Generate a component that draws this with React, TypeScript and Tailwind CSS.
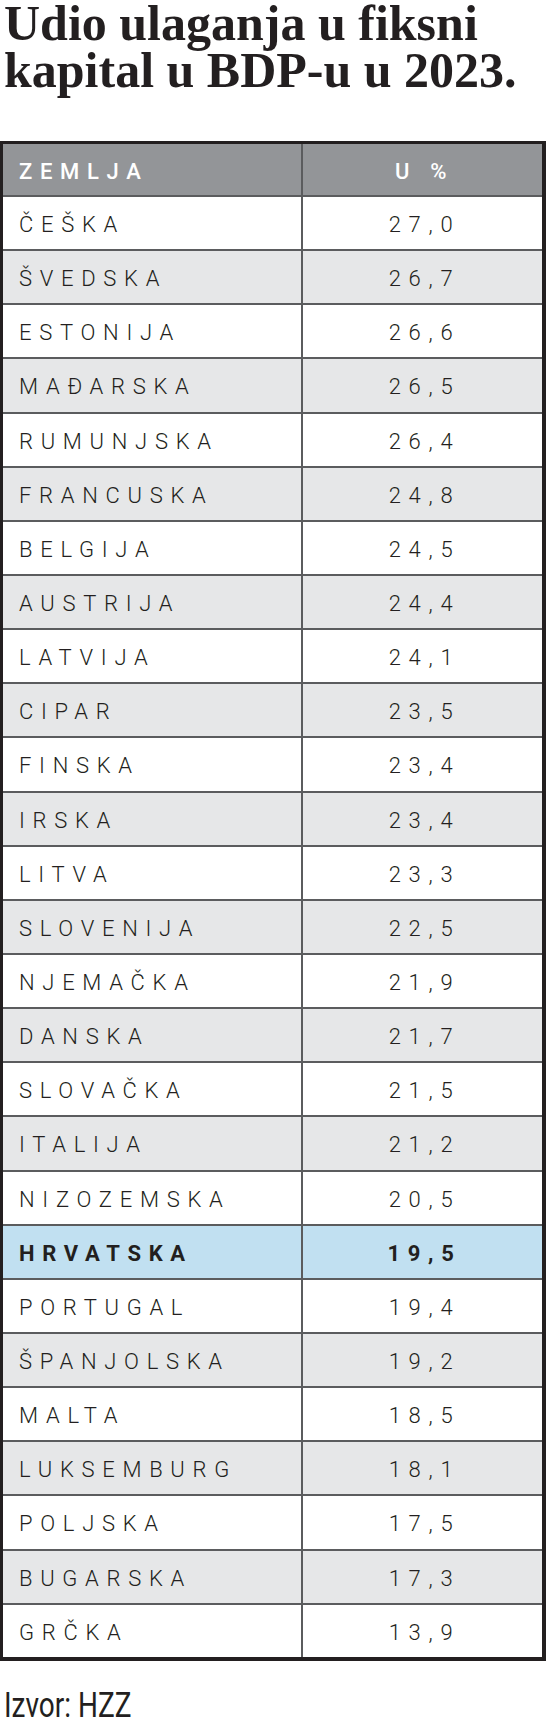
import React from "react";

type Row = { country: string; value: string; highlight?: boolean };

const rows: Row[] = [
  { country: "ČEŠKA", value: "27,0" },
  { country: "ŠVEDSKA", value: "26,7" },
  { country: "ESTONIJA", value: "26,6" },
  { country: "MAĐARSKA", value: "26,5" },
  { country: "RUMUNJSKA", value: "26,4" },
  { country: "FRANCUSKA", value: "24,8" },
  { country: "BELGIJA", value: "24,5" },
  { country: "AUSTRIJA", value: "24,4" },
  { country: "LATVIJA", value: "24,1" },
  { country: "CIPAR", value: "23,5" },
  { country: "FINSKA", value: "23,4" },
  { country: "IRSKA", value: "23,4" },
  { country: "LITVA", value: "23,3" },
  { country: "SLOVENIJA", value: "22,5" },
  { country: "NJEMAČKA", value: "21,9" },
  { country: "DANSKA", value: "21,7" },
  { country: "SLOVAČKA", value: "21,5" },
  { country: "ITALIJA", value: "21,2" },
  { country: "NIZOZEMSKA", value: "20,5" },
  { country: "HRVATSKA", value: "19,5", highlight: true },
  { country: "PORTUGAL", value: "19,4" },
  { country: "ŠPANJOLSKA", value: "19,2" },
  { country: "MALTA", value: "18,5" },
  { country: "LUKSEMBURG", value: "18,1" },
  { country: "POLJSKA", value: "17,5" },
  { country: "BUGARSKA", value: "17,3" },
  { country: "GRČKA", value: "13,9" },
];

const sans = "font-['Roboto','Liberation_Sans',sans-serif]";

export default function App() {
  return (
    <div className="w-[546px] bg-white text-[#231f20]">
      <h1 className="pl-1 font-['Liberation_Serif',serif] text-[50px] font-bold leading-[47px]">
        Udio ulaganja u fiksni
        <br />
        kapital u BDP-u u 2023.
      </h1>

      {/* tablica */}
      <div className={`mt-[47px] border-t-[3px] border-r-4 border-b-4 border-l-[3px] border-[#231f20] ${sans}`}>
        <div className="flex h-[51px] bg-[#939598] text-[22px] font-medium leading-none tracking-[0.35em] text-white">
          <div className="flex w-[300px] items-center border-r-2 border-[#5b5c5e] pt-1 pl-4">ZEMLJA</div>
          <div className="flex flex-1 items-center justify-center pt-1 pl-1">U %</div>
        </div>
        {rows.map((row, i) => {
          const bg = row.highlight ? "bg-[#c1e0f1]" : i % 2 === 1 ? "bg-[#e6e7e8]" : "bg-white";
          return (
            <div
              key={row.country}
              className={`flex h-[54.15px] border-t-2 border-[#5b5c5e] text-[22px] leading-none tracking-[0.35em] ${bg} ${
                row.highlight ? "font-bold" : "font-light"
              }`}
            >
              <div className="flex w-[300px] items-center border-r-2 border-[#5b5c5e] pt-1 pl-4">{row.country}</div>
              <div className="flex flex-1 items-center justify-center pt-1 pl-1">{row.value}</div>
            </div>
          );
        })}
      </div>

      <p className={`mt-[27px] pl-1 text-[35px] leading-none ${sans}`}>
        <span className="inline-block origin-left scale-x-80">Izvor: HZZ</span>
      </p>
    </div>
  );
}
